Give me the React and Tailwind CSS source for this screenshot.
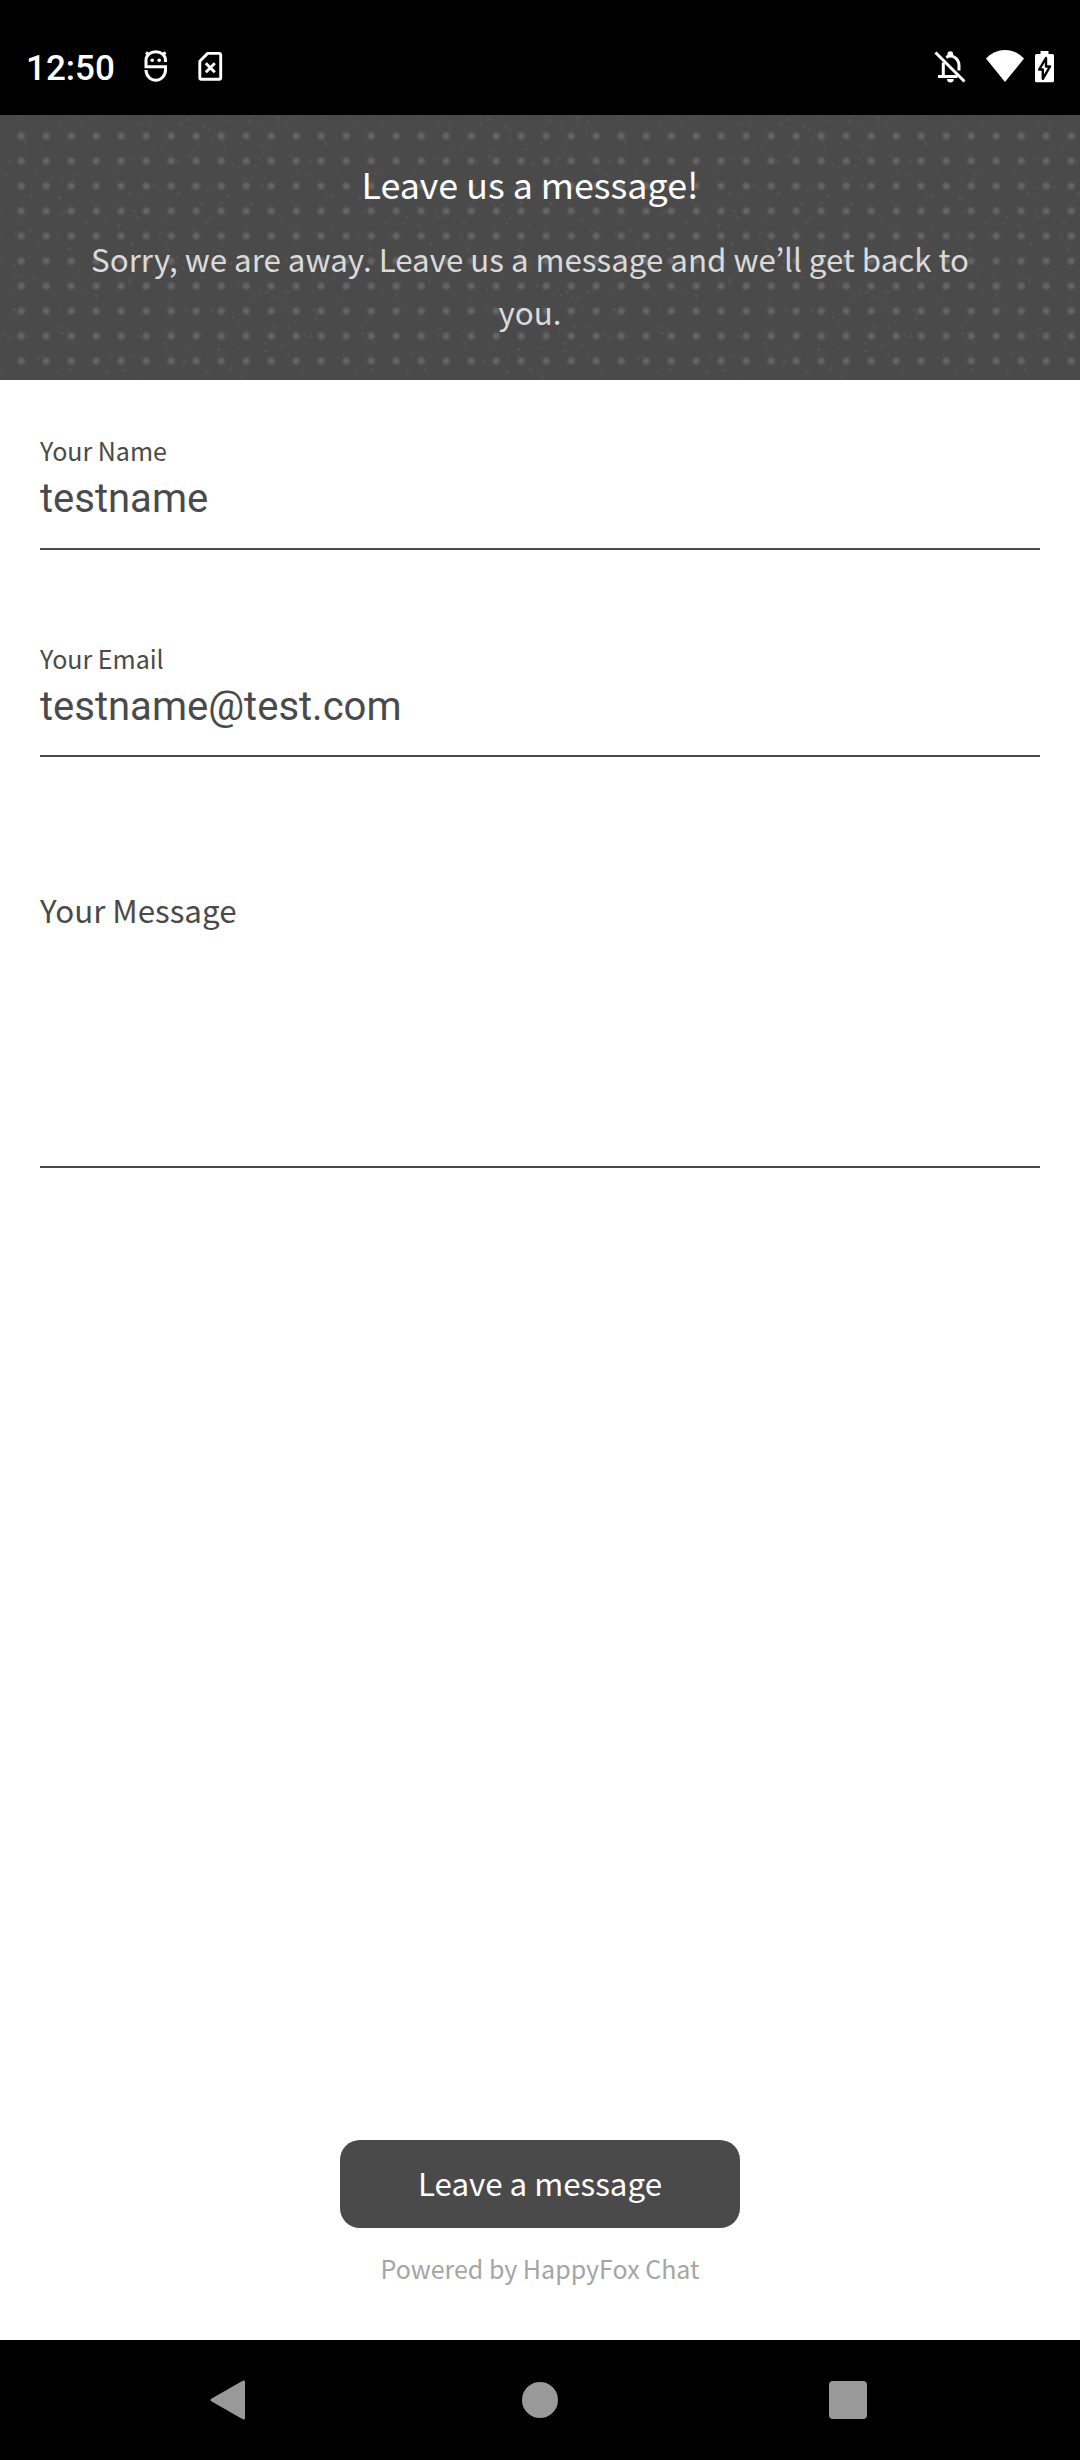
import React from "react";

const SANS = "font-['Noto_Sans_CJK_KR','Open_Sans',sans-serif]";

// Small seeded generator so the paper grain is the same on every load.
function grain(count, width, height) {
  let seed = 7;
  const next = () => {
    seed = (seed * 16807) % 2147483647;
    return seed / 2147483647;
  };
  return Array.from({ length: count }, () => ({
    x: next() * width,
    y: next() * height,
    r: 0.7 + next() * 0.9,
    o: 0.02 + next() * 0.04,
  }));
}

const SPECKS = grain(330, 300, 265);

function Texture() {
  return (
    <svg className="absolute inset-0 h-full w-full" aria-hidden="true">
      <defs>
        <radialGradient id="dot">
          <stop offset="0" stopColor="#6a6a6a" />
          <stop offset="0.5" stopColor="#5f5f5f" />
          <stop offset="1" stopColor="#4a4a4a" />
        </radialGradient>
        <pattern id="grain" width="300" height="265" patternUnits="userSpaceOnUse">
          {SPECKS.map((s, i) => (
            <circle key={i} cx={s.x} cy={s.y} r={s.r} fill="#fff" opacity={s.o} />
          ))}
        </pattern>
        <pattern id="dots" x="8.7" y="8.5" width="25" height="25" patternUnits="userSpaceOnUse">
          <circle cx="12.5" cy="12.5" r="5" fill="url(#dot)" />
        </pattern>
      </defs>
      <rect width="100%" height="100%" fill="url(#grain)" />
      <rect width="100%" height="252" fill="url(#dots)" />
    </svg>
  );
}

function StatusBar() {
  return (
    <div className="flex h-[115px] items-start bg-black pl-[26px] pr-[26px] pt-[46px] text-white">
      <div className="mt-[2px] h-[42px] w-[118px] font-['Roboto',sans-serif] text-[35px] font-medium leading-[42px]">12:50</div>
      <svg className="mt-[4px] h-[33px] w-[24px]" viewBox="0 0 24 33" fill="none" stroke="#fff" strokeWidth="3">
        <path d="M21.5 12V10.4A9.5 8.5 0 0 0 2 10.4V16.8H21.5V20A9.7 10.2 0 0 1 2 20" />
        <path d="M2 2.4L5 5M21.5 2.4L18.5 5" strokeWidth="3" />
        <circle cx="8.2" cy="10.2" r="1.8" fill="#fff" stroke="none" />
        <circle cx="15.2" cy="10.2" r="1.8" fill="#fff" stroke="none" />
      </svg>
      <svg className="ml-[30px] mt-[5px] h-[31px] w-[25px]" viewBox="0 0 25 31" fill="none" stroke="#fff" strokeWidth="2.9">
        <path d="M9.6 2.4H21.2Q22.7 2.4 22.7 3.9V26.7Q22.7 28.2 21.2 28.2H3.3Q1.8 28.2 1.8 26.7V10.2Z" strokeLinejoin="round" />
        <path d="M7.8 12.3L16.8 21.3M16.8 12.3L7.8 21.3" />
      </svg>
      <div className="grow" />
      <svg className="mt-[4px] h-[34px] w-[32px]" viewBox="0 0 32 34" fill="none" stroke="#fff" strokeWidth="3">
        <path d="M1.5 2.5L30.5 31.5" />
        <path d="M9.3 12.5V26M4 26.6H23.5" />
        <path d="M12.2 7.4Q16.8 4.8 20.8 7.4Q25 10.2 25 15.5V20.5" />
        <path d="M13.4 6V4.2A2.9 2.9 0 0 1 19.2 4.2V6.5ZM13 29H19.8A3.4 3.4 0 0 1 13 29Z" fill="#fff" stroke="none" />
      </svg>
      <svg className="ml-[20px] mt-[4px] h-[32px] w-[38px]" viewBox="0 0 38 32">
        <path d="M0 8.5Q8 0 19 0T38 8.5L19 32Z" fill="#fff" />
      </svg>
      <svg className="ml-[11px] mt-[5px] h-[32px] w-[19px]" viewBox="0 0 19 32">
        <path d="M5.5 0H13.5V3H17.5Q19 3 19 4.5V29.8Q19 31.3 17.5 31.3H1.5Q0 31.3 0 29.8V4.5Q0 3 1.5 3H5.5Z" fill="#fff" />
        <path d="M11 7L4.2 18.5H7.8V27.8L15 15.5H11Z" fill="#fff" stroke="#000" strokeWidth="2.4" strokeLinejoin="round" />
      </svg>
    </div>
  );
}

function Field({ label, value, height }) {
  return (
    <div className={`${height} border-b-2 border-[#4a4a4a]`}>
      <div className={`${SANS} h-10 text-[25px] leading-8`}>{label}</div>
      <div className="font-['Roboto',sans-serif] text-[40px] leading-[50px]">{value}</div>
    </div>
  );
}

export default function App() {
  return (
    <div className={`${SANS} flex h-[2460px] w-[1080px] flex-col bg-white text-[#4a4a4a]`}>
      <StatusBar />
      <header className="relative h-[265px] bg-[#4a4a4a]">
        <Texture />
        <div className="relative ml-20 mr-[100px] pt-[43px] text-center">
          <h1 className="text-[35.8px] leading-[50px] text-white">Leave us a message!</h1>
          <p className="mt-6 text-[31.3px] leading-[53px] text-[#dadada]">
            Sorry, we are away. Leave us a message and we’ll get back to you.
          </p>
        </div>
      </header>

      <main className="flex grow flex-col px-10 pt-[54px]">
        <Field label="Your Name" value="testname" height="h-[116px]" />
        <div className="h-[92px]" />
        <Field label="Your Email" value="testname@test.com" height="h-[115px]" />
        <div className="mt-[91px] h-[320px] border-b-2 border-[#4a4a4a] pt-[36px] text-[31.3px] leading-[52px]">
          Your Message
        </div>
        <div className="grow" />
        <div className="flex h-[200px] flex-col items-center">
          <button className="h-[88px] w-[400px] rounded-[20px] bg-[#4a4a4a] pb-[3px] text-[31.3px] leading-[80px] text-white">
            Leave a message
          </button>
          <div className="mt-[24px] text-[25px] leading-8 text-[#a5a5a5]">Powered by HappyFox Chat</div>
        </div>
      </main>

      <nav className="flex h-[120px] items-center justify-between bg-black pl-[209px] pr-[213px]">
        <svg className="h-[42px] w-[37px]" viewBox="0 0 37 42">
          <path d="M3 21L34.5 3V39Z" fill="#999" stroke="#999" strokeWidth="3" strokeLinejoin="round" />
        </svg>
        <div className="ml-[5px] h-[36px] w-[36px] rounded-full bg-[#999]" />
        <div className="h-[38px] w-[38px] rounded-[4px] bg-[#999]" />
      </nav>
    </div>
  );
}
